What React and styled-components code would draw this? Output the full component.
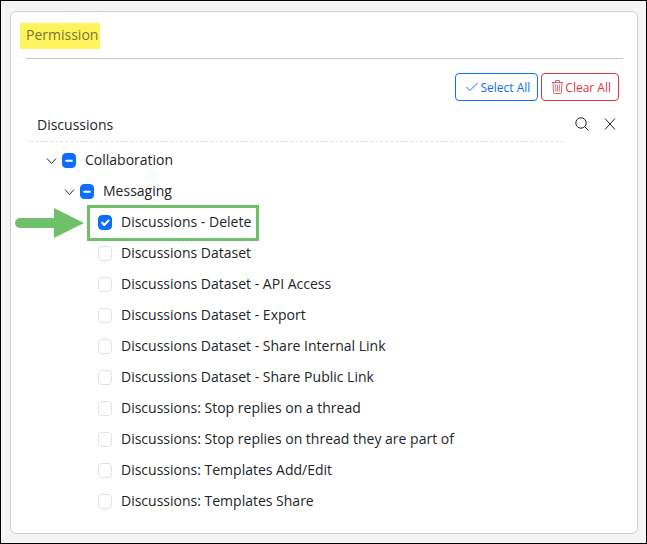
import React, { useEffect, useRef, useState } from "react";
import styled, { createGlobalStyle } from "styled-components";

const GlobalStyle = createGlobalStyle`
  * {
    box-sizing: border-box;
  }

  body {
    margin: 0;
    color: #212529;
    font-family: "Open Sans", "Noto Sans", sans-serif;
    font-size: 14px;
    line-height: 20px;
  }
`;

const Page = styled.main`
  min-height: 100vh;
  display: flex;
  border: 1px solid #000;
  padding: 10px 8px 9px 9px;
  background: #f5f5f5;
`;

const Panel = styled.section`
  flex: 1;
  min-width: 0;
  padding: 11px 14px 12px 15px;
  border: 1px solid #cfcfcf;
  border-radius: 6px;
  background: #fff;
`;

const PanelHeader = styled.header`
  padding-bottom: 9px;
  border-bottom: 1px solid #c6c6c6;
`;

const Title = styled.h1`
  width: fit-content;
  margin: 0 0 0 -6px;
  padding: 2px 2px 4px 6px;
  background: #fff45c;
  color: #77762f;
  font-size: 14px;
  font-weight: 400;
  line-height: 20px;
`;

const Actions = styled.div`
  display: flex;
  justify-content: flex-end;
  gap: 3px;
  padding: 14px 4px 0 0;
`;

const ActionButton = styled.button`
  height: 28px;
  display: flex;
  align-items: center;
  gap: 1px;
  padding: 0 7px 0 9px;
  border: 1px solid ${({ $color }) => $color};
  border-radius: 4px;
  background: #fff;
  color: ${({ $color }) => $color};
  font-family: "Open Sans", "Noto Sans", sans-serif;
  font-size: 12px;
  cursor: pointer;
`;

const SearchBar = styled.form`
  display: flex;
  align-items: center;
  padding: 8px 0 0;

  input {
    flex: 1;
    min-width: 0;
    height: 33px;
    padding: 0 11px 2px;
    border: 0;
    border-bottom: 1px dashed #dee2e6;
    border-radius: 4px;
    outline: none;
    color: #212529;
    font: inherit;
  }
`;

const SearchButtons = styled.div`
  display: flex;
  padding-bottom: 3px;
`;

const IconButton = styled.button`
  width: 28px;
  height: 30px;
  display: flex;
  align-items: center;
  justify-content: center;
  padding: 0 0 0 2px;
  border: 0;
  background: none;
  color: #212529;
  cursor: pointer;
`;

const Tree = styled.ul`
  margin: 0;
  padding: 3px 0 0 18px;
  list-style: none;

  ul {
    margin: 0;
    padding: 0 0 0 18px;
    list-style: none;
  }
`;

const Row = styled.div`
  position: relative;
  width: fit-content;
  height: 31px;
  display: flex;
  align-items: center;

  label {
    padding: 0 0 1px 9px;
    white-space: nowrap;
  }
`;

const Toggle = styled.button`
  width: 18px;
  height: 18px;
  display: flex;
  align-items: center;
  padding: 0 0 0 2px;
  border: 0;
  background: none;
  color: #212529;
  cursor: pointer;

  svg {
    transform: ${({ $open }) => ($open ? "none" : "rotate(-90deg)")};
  }
`;

const Check = styled.input`
  appearance: none;
  width: 14px;
  height: 15px;
  margin: 0;
  border: 1px solid #dee2e6;
  border-radius: 4px;
  background: #fff center / 14px 14px no-repeat;

  &:checked {
    border-color: #0d6efd;
    background-color: #0d6efd;
    background-image: url("data:image/svg+xml,%3csvg xmlns='http://www.w3.org/2000/svg' viewBox='0 0 20 20'%3e%3cpath fill='none' stroke='%23fff' stroke-linecap='round' stroke-linejoin='round' stroke-width='3' d='m6 10 3 3 6-6'/%3e%3c/svg%3e");
  }

  &:indeterminate {
    border-color: #0d6efd;
    background-color: #0d6efd;
    background-image: url("data:image/svg+xml,%3csvg xmlns='http://www.w3.org/2000/svg' viewBox='0 0 20 20'%3e%3cpath fill='none' stroke='%23fff' stroke-linecap='round' stroke-linejoin='round' stroke-width='3' d='M6 10h8'/%3e%3c/svg%3e");
  }
`;

const Leaf = styled.li`
  padding-left: 18px;
`;

const Highlight = styled.div`
  position: absolute;
  inset: -2px -8px -3px -11px;
  border: 3px solid #70bf6a;
  pointer-events: none;
`;

const Arrow = styled.svg`
  position: absolute;
  top: 1px;
  left: -83px;
  pointer-events: none;
`;

const CheckIcon = () => (
  <svg width="14" height="14" viewBox="0 0 14 14" fill="none" stroke="currentColor">
    <path d="M1.5 7l3.5 3.5L12.5 3" />
  </svg>
);

const TrashIcon = () => (
  <svg width="13" height="14" viewBox="0 0 13 14" fill="none" stroke="currentColor" strokeWidth="0.8">
    <path d="M1 2.5h11M4.5 2.5v-2h4v2M2 2.5l.5 10q.1 1 1 1h6q.9 0 1-1l.5-10" />
    <path d="M4.5 4.5l.3 7M6.5 4.5v7M8.5 4.5l-.3 7" strokeWidth="0.7" />
  </svg>
);

const SearchIcon = () => (
  <svg width="14" height="14" viewBox="0 0 14 14" fill="none" stroke="currentColor">
    <circle cx="6" cy="6" r="5.2" />
    <path d="M9.7 9.7l3.8 3.8" />
  </svg>
);

const CloseIcon = () => (
  <svg width="12" height="12" viewBox="0 0 12 12" fill="none" stroke="currentColor">
    <path d="M1 .5l10 11M11 .5L1 11.5" />
  </svg>
);

const Chevron = () => (
  <svg width="12" height="8" viewBox="0 0 12 8" fill="none" stroke="currentColor">
    <path d="M1 1.5L5.5 6.5L10 1.5" />
  </svg>
);

const permissions = [
  "Discussions - Delete",
  "Discussions Dataset",
  "Discussions Dataset - API Access",
  "Discussions Dataset - Export",
  "Discussions Dataset - Share Internal Link",
  "Discussions Dataset - Share Public Link",
  "Discussions: Stop replies on a thread",
  "Discussions: Stop replies on thread they are part of",
  "Discussions: Templates Add/Edit",
  "Discussions: Templates Share",
];

const Group = ({ id, name, all, some, onChange, children }) => {
  const [open, setOpen] = useState(true);
  const box = useRef(null);

  useEffect(() => {
    box.current.indeterminate = some && !all;
  }, [some, all]);

  return (
    <li>
      <Row>
        <Toggle
          type="button"
          $open={open}
          aria-label={`Toggle ${name}`}
          aria-expanded={open}
          onClick={() => setOpen(!open)}
        >
          <Chevron />
        </Toggle>
        <Check
          ref={box}
          id={id}
          type="checkbox"
          checked={all}
          onChange={(e) => onChange(e.target.checked)}
        />
        <label htmlFor={id}>{name}</label>
      </Row>
      {open && <ul>{children}</ul>}
    </li>
  );
};

const App = () => {
  const [query, setQuery] = useState("Discussions");
  const [selected, setSelected] = useState(["Discussions - Delete"]);

  const all = selected.length === permissions.length;
  const some = selected.length > 0;
  const setAll = (on) => setSelected(on ? permissions : []);

  const toggle = (name) =>
    setSelected(
      selected.includes(name)
        ? selected.filter((item) => item !== name)
        : [...selected, name]
    );

  return (
    <>
      <GlobalStyle />
      <Page>
        <Panel>
          <PanelHeader>
            <Title>Permission</Title>
          </PanelHeader>
          <Actions>
            <ActionButton type="button" $color="#0d6efd" onClick={() => setAll(true)}>
              <CheckIcon />
              Select All
            </ActionButton>
            <ActionButton type="button" $color="#dc3545" onClick={() => setAll(false)}>
              <TrashIcon />
              Clear All
            </ActionButton>
          </Actions>
          <SearchBar onSubmit={(e) => e.preventDefault()}>
            <input
              type="text"
              aria-label="Search permissions"
              value={query}
              onChange={(e) => setQuery(e.target.value)}
            />
            <SearchButtons>
              <IconButton type="submit" aria-label="Search">
                <SearchIcon />
              </IconButton>
              <IconButton type="button" aria-label="Clear search" onClick={() => setQuery("")}>
                <CloseIcon />
              </IconButton>
            </SearchButtons>
          </SearchBar>
          <Tree>
            <Group id="collaboration" name="Collaboration" all={all} some={some} onChange={setAll}>
              <Group id="messaging" name="Messaging" all={all} some={some} onChange={setAll}>
                {permissions.map((name, i) => (
                  <Leaf key={name}>
                    <Row>
                      <Check
                        id={`permission-${i}`}
                        type="checkbox"
                        checked={selected.includes(name)}
                        onChange={() => toggle(name)}
                      />
                      <label htmlFor={`permission-${i}`}>{name}</label>
                      {i === 0 && (
                        <>
                          <Highlight />
                          <Arrow width="69" height="30" viewBox="0 0 69 30" fill="#70bf6a">
                            <path d="M5 10h34V0l30 15l-30 15V20H5a5 5 0 0 1 0-10z" />
                          </Arrow>
                        </>
                      )}
                    </Row>
                  </Leaf>
                ))}
              </Group>
            </Group>
          </Tree>
        </Panel>
      </Page>
    </>
  );
};

export default App;
